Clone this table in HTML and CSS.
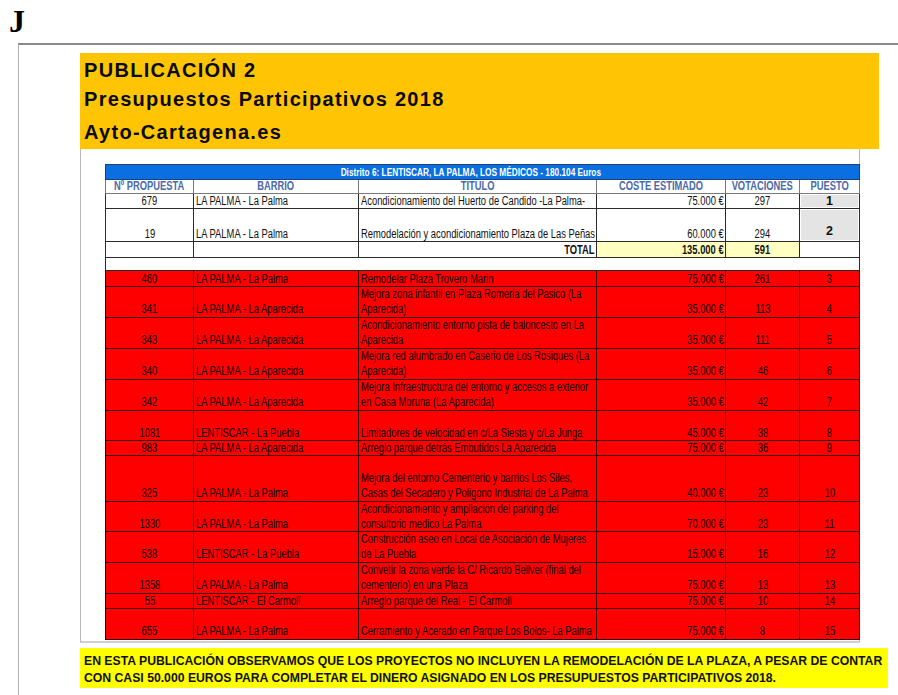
FILE: index.html
```html
<!DOCTYPE html>
<html lang="es">
<head>
<meta charset="utf-8">
<title>Publicación 2</title>
<link rel="stylesheet" href="styles.css">
</head>
<body>
<div class="letter">J</div>
<div class="doc">
  <div class="banner">
    <div class="bl">PUBLICACIÓN 2</div>
    <div class="bl">Presupuestos Participativos 2018</div>
    <div class="bl bl3">Ayto-Cartagena.es</div>
  </div>
  <div class="sheet">
    <table class="grid">
      <colgroup>
        <col class="c1"><col class="c2"><col class="c3"><col class="c4"><col class="c5"><col class="c6">
      </colgroup>
      <tr class="bar"><td colspan="6"><span class="t">Distrito 6: LENTISCAR, LA PALMA, LOS MÉDICOS - 180.104 Euros</span></td></tr>
      <tr class="head"><td><span class="t">Nº PROPUESTA</span></td><td><span class="t">BARRIO</span></td><td><span class="t">TITULO</span></td><td><span class="t">COSTE ESTIMADO</span></td><td><span class="t">VOTACIONES</span></td><td><span class="t">PUESTO</span></td></tr>
      <tr class="w h14"><td class="ct"><span class="t">679</span></td><td><span class="t">LA PALMA - La Palma</span></td><td><span class="t">Acondicionamiento del Huerto de Candido -La Palma-</span></td><td class="rt"><span class="t">75.000 €</span></td><td class="ct"><span class="t">297</span></td><td class="pos"><span class="pb">1</span></td></tr>
      <tr class="w h33"><td class="ct"><span class="t">19</span></td><td><span class="t">LA PALMA - La Palma</span></td><td><span class="t">Remodelación y acondicionamiento Plaza de Las Peñas</span></td><td class="rt"><span class="t">60.000 €</span></td><td class="ct"><span class="t">294</span></td><td class="pos"><span class="pb tall">2</span></td></tr>
      <tr class="w h16"><td></td><td></td><td class="rt b"><span class="t">TOTAL</span></td><td class="rt b yl"><span class="t">135.000 €</span></td><td class="ct b yl"><span class="t">591</span></td><td></td></tr>
      <tr class="w h13 empty"><td colspan="6"></td></tr>
      <tr class="r h16"><td class="ct"><span class="t">460</span></td><td><span class="t">LA PALMA - La Palma</span></td><td><span class="t">Remodelar Plaza Trovero Marin</span></td><td class="rt"><span class="t">75.000 €</span></td><td class="ct"><span class="t">261</span></td><td class="ct"><span class="t">3</span></td></tr>
      <tr class="r h31"><td class="ct"><span class="t">341</span></td><td><span class="t">LA PALMA - La Aparecida</span></td><td><span class="t">Mejora zona infantil en Plaza Romeria del Pasico (La<br>Aparecida)</span></td><td class="rt"><span class="t">35.000 €</span></td><td class="ct"><span class="t">113</span></td><td class="ct"><span class="t">4</span></td></tr>
      <tr class="r h31"><td class="ct"><span class="t">343</span></td><td><span class="t">LA PALMA - La Aparecida</span></td><td><span class="t">Acondicionamiento entorno pista de baloncesto en La<br>Aparecida</span></td><td class="rt"><span class="t">35.000 €</span></td><td class="ct"><span class="t">111</span></td><td class="ct"><span class="t">5</span></td></tr>
      <tr class="r h31"><td class="ct"><span class="t">340</span></td><td><span class="t">LA PALMA - La Aparecida</span></td><td><span class="t">Mejora red alumbrado en Caserio de Los Rosiques (La<br>Aparecida)</span></td><td class="rt"><span class="t">35.000 €</span></td><td class="ct"><span class="t">46</span></td><td class="ct"><span class="t">6</span></td></tr>
      <tr class="r h31"><td class="ct"><span class="t">342</span></td><td><span class="t">LA PALMA - La Aparecida</span></td><td><span class="t">Mejora Infraestructura del entorno y accesos a exterior<br>en Casa Moruna (La Aparecida)</span></td><td class="rt"><span class="t">35.000 €</span></td><td class="ct"><span class="t">42</span></td><td class="ct"><span class="t">7</span></td></tr>
      <tr class="r h30"><td class="ct"><span class="t">1081</span></td><td><span class="t">LENTISCAR - La Puebla</span></td><td><span class="t">Limitadores de velocidad en c/La Siesta y c/La Junga</span></td><td class="rt"><span class="t">45.000 €</span></td><td class="ct"><span class="t">38</span></td><td class="ct"><span class="t">8</span></td></tr>
      <tr class="r h15"><td class="ct"><span class="t">983</span></td><td><span class="t">LA PALMA - La Aparecida</span></td><td><span class="t">Arreglo parque detrás Embutidos La Aparecida</span></td><td class="rt"><span class="t">75.000 €</span></td><td class="ct"><span class="t">36</span></td><td class="ct"><span class="t">9</span></td></tr>
      <tr class="r h47"><td class="ct"><span class="t">325</span></td><td><span class="t">LA PALMA - La Palma</span></td><td><span class="t">Mejora del entorno Cementerio y barrios Los Siles,<br>Casas del Secadero y Poligono Industrial de La Palma</span></td><td class="rt"><span class="t">40.000 €</span></td><td class="ct"><span class="t">23</span></td><td class="ct"><span class="t">10</span></td></tr>
      <tr class="r h30"><td class="ct"><span class="t">1330</span></td><td><span class="t">LA PALMA - La Palma</span></td><td><span class="t">Acondicionamiento y ampliación del parking del<br>consultorio medico La Palma</span></td><td class="rt"><span class="t">70.000 €</span></td><td class="ct"><span class="t">23</span></td><td class="ct"><span class="t">11</span></td></tr>
      <tr class="r h31"><td class="ct"><span class="t">538</span></td><td><span class="t">LENTISCAR - La Puebla</span></td><td><span class="t">Construcción aseo en Local de Asociación de Mujeres<br>de La Puebla</span></td><td class="rt"><span class="t">15.000 €</span></td><td class="ct"><span class="t">16</span></td><td class="ct"><span class="t">12</span></td></tr>
      <tr class="r h31"><td class="ct"><span class="t">1358</span></td><td><span class="t">LA PALMA - La Palma</span></td><td><span class="t">Convetir la zona verde la C/ Ricardo Bellver (final del<br>cementerio) en una Plaza</span></td><td class="rt"><span class="t">75.000 €</span></td><td class="ct"><span class="t">13</span></td><td class="ct"><span class="t">13</span></td></tr>
      <tr class="r h15"><td class="ct"><span class="t">55</span></td><td><span class="t">LENTISCAR - El Carmolí</span></td><td><span class="t">Arreglo parque del Real - El Carmolí</span></td><td class="rt"><span class="t">75.000 €</span></td><td class="ct"><span class="t">10</span></td><td class="ct"><span class="t">14</span></td></tr>
      <tr class="r h31"><td class="ct"><span class="t">655</span></td><td><span class="t">LA PALMA - La Palma</span></td><td><span class="t">Cerramiento y Acerado en Parque Los Bolos- La Palma</span></td><td class="rt"><span class="t">75.000 €</span></td><td class="ct"><span class="t">8</span></td><td class="ct"><span class="t">15</span></td></tr>
    </table>
  </div>
  <div class="note">
    <span class="nl">EN ESTA PUBLICACIÓN OBSERVAMOS QUE LOS PROYECTOS NO INCLUYEN LA REMODELACIÓN DE LA PLAZA, A PESAR DE CONTAR</span>
    <span class="nl">CON CASI 50.000 EUROS PARA COMPLETAR EL DINERO ASIGNADO EN LOS PRESUPUESTOS PARTICIPATIVOS 2018.</span>
  </div>
</div>
</body>
</html>
```
FILE: styles.css
```css
html, body {
  margin: 0;
  padding: 0;
  background: #fff;
  overflow: hidden;
}
body {
  width: 898px;
  height: 695px;
}
.letter {
  font-family: "Liberation Serif", serif;
  font-weight: bold;
  font-size: 32px;
  line-height: 43px;
  height: 43px;
  padding-left: 9px;
  color: #000;
}
.doc {
  margin-left: 18px;
  border-top: 2px solid #8a8a8a;
  border-left: 1px solid #b0b0b0;
  padding: 8px 0 0 61px;
  height: 660px;
}
.banner {
  width: 799px;
  box-sizing: border-box;
  background: #ffc505;
  padding: 3px 0 2px 4px;
  font-family: "Liberation Sans", Arial, sans-serif;
  font-weight: bold;
  font-size: 20px;
  letter-spacing: 1.3px;
  color: #0a0a0a;
}
.bl {
  line-height: 29px;
  height: 29px;
}
.bl3 {
  margin-top: 4px;
}
.sheet {
  width: 780px;
  box-sizing: border-box;
  border-left: 1px solid #b8b8b8;
  border-right: 1px solid #b8b8b8;
  border-bottom: 2px solid #d0d0d0;
  padding: 15px 0 1px 24px;
}
.grid {
  border-collapse: collapse;
  table-layout: fixed;
  width: 754px;
  font-family: "Liberation Sans", Arial, sans-serif;
  font-size: 12.5px;
  color: #111;
}
.c1 { width: 88px; }
.c2 { width: 165px; }
.c3 { width: 238px; }
.c4 { width: 129px; }
.c5 { width: 74px; }
.c6 { width: 60px; }
.grid td {
  border: 1px solid #2a2a2a;
  padding: 0 2px;
  vertical-align: bottom;
  line-height: 13px;
  white-space: nowrap;
  overflow: hidden;
}
.t {
  display: inline-block;
  transform: scaleX(0.75);
  transform-origin: 0 50%;
}
.grid .ct { text-align: center; }
.grid .ct .t { transform-origin: 50% 50%; margin: 0 -20px; }
.grid .rt { text-align: right; padding-right: 1px; }
.grid .rt .t { transform-origin: 100% 50%; }
.grid .b { font-weight: bold; }
.bar td {
  background: #0a6fe0;
  color: #fff;
  font-weight: bold;
  text-align: center;
  height: 14px;
  line-height: 14px;
  font-size: 11.5px;
  border-color: #1d3f7a;
  padding: 0 24px 0 0;
}
.bar .t {
  transform: scaleX(0.72);
  transform-origin: 50% 50%;
  margin: 0 -60px;
}
.head td {
  color: #4a6aa8;
  font-weight: bold;
  text-align: center;
  height: 13px;
  border-color: #7a7a7a;
  font-size: 12px;
}
.head .t {
  transform: scaleX(0.78);
  transform-origin: 50% 50%;
  margin: 0 -20px;
}
.w td { background: #fff; }
.grid td.yl { background: #ffffc0; }
.grid td.pos {
  padding: 1px 1px 0;
  vertical-align: top;
  text-align: center;
}
.pb {
  display: block;
  background: #e4e4e4;
  font-weight: bold;
  height: 12px;
  line-height: 12px;
}
.pb.tall {
  height: 30px;
  line-height: 42px;
}
.empty td {
  border-left: 1px solid #2a2a2a;
  border-right: 1px solid #2a2a2a;
}
.r td {
  background: #ff0000;
  color: #080000;
  border-color: #3a0000;
}
.h13 td { height: 12px; }
.h14 td { height: 13px; }
.h15 td { height: 14px; }
.h16 td { height: 15px; }
.h30 td { height: 29px; }
.h31 td { height: 30px; }
.h33 td { height: 31px; }
.h47 td { height: 45px; }
.h16 td, .h15 td { line-height: 14px; }
.h31 td, .h47 td { line-height: 15px; }
.h30 td { line-height: 14.5px; }
.note {
  margin-top: 5px;
  width: 808px;
  box-sizing: border-box;
  background: #ffff00;
  padding: 4px 4px 2px 4px;
  font-family: "Liberation Sans", Arial, sans-serif;
  font-weight: bold;
  font-size: 13.5px;
  line-height: 17px;
  color: #111;
  white-space: nowrap;
}
.nl {
  display: block;
  transform: scaleX(0.905);
  transform-origin: 0 50%;
}
```
